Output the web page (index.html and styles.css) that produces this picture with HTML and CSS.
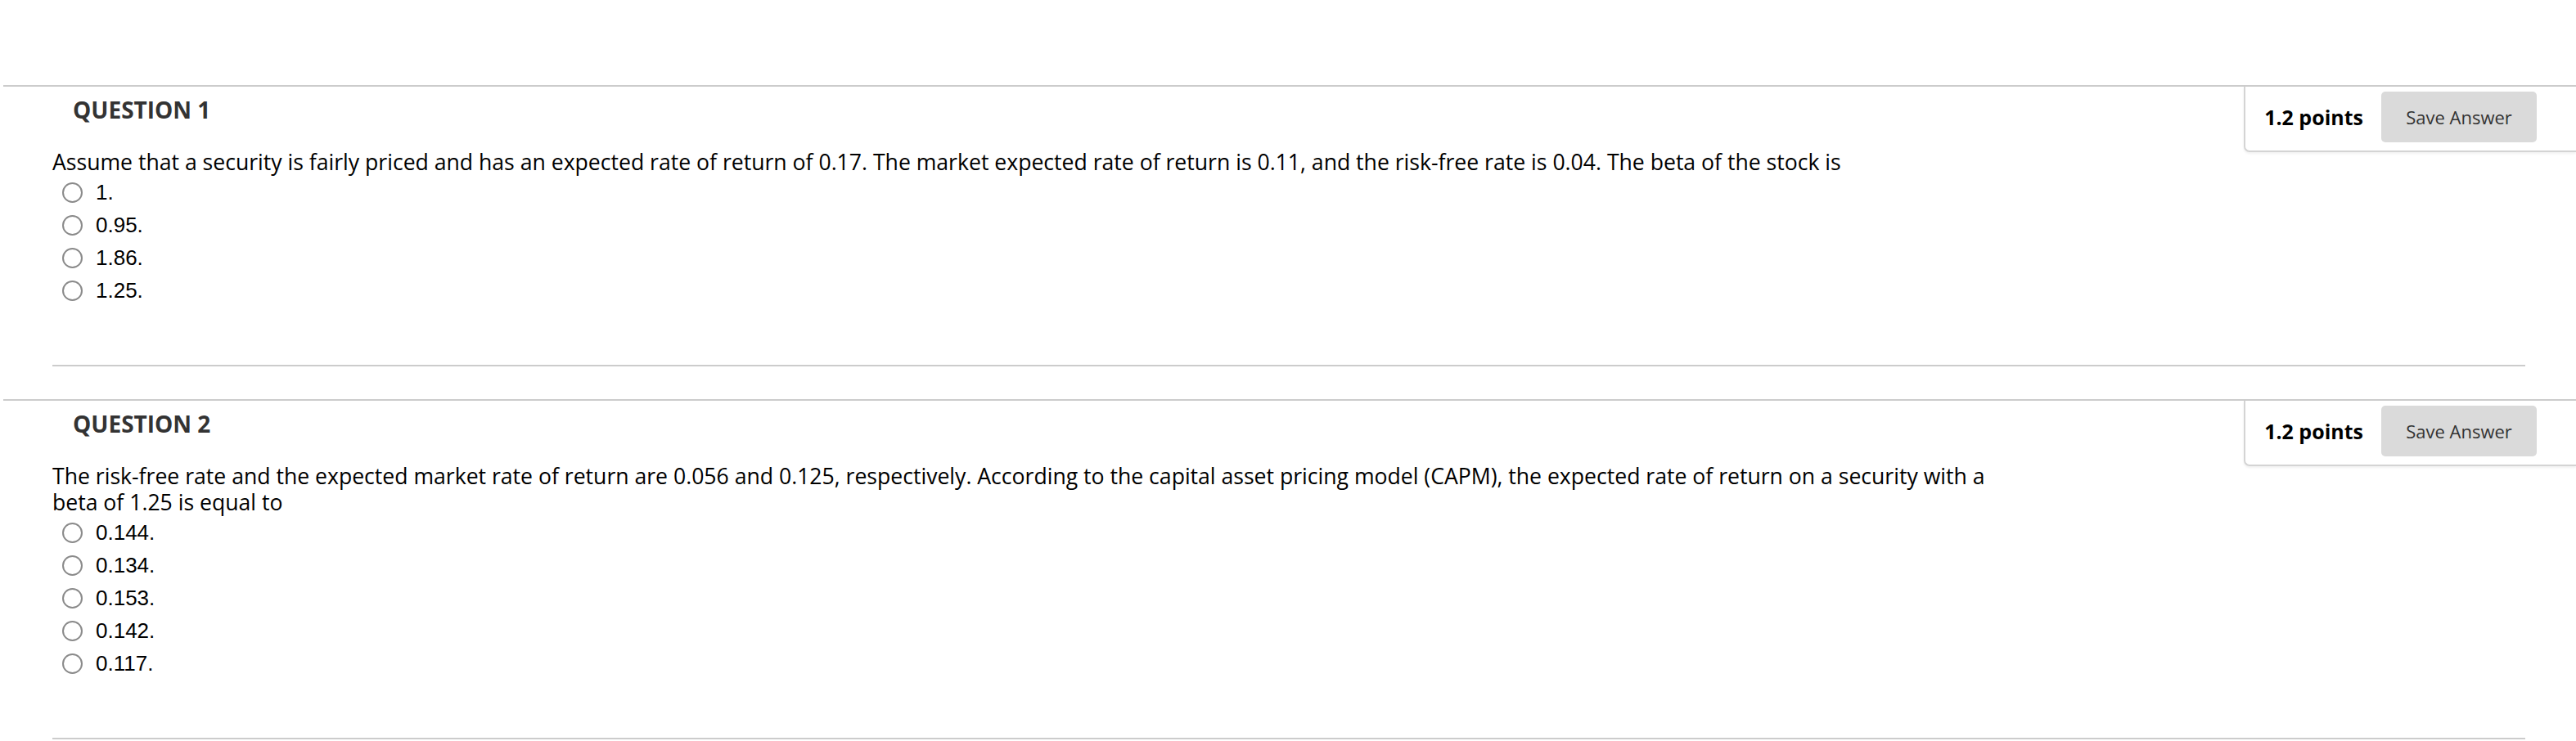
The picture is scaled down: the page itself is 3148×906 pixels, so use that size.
FILE: index.html
```html
<!DOCTYPE html>
<html lang="en">
<head>
<meta charset="utf-8">
<title>Questions</title>
<link rel="stylesheet" href="styles.css">
</head>
<body>
<main class="page">
  <section class="question">
    <div class="q-head">
      <h3 class="q-title">QUESTION 1</h3>
      <div class="points-box">
        <span class="points">1.2 points</span>
        <button class="save-btn" type="button">Save Answer</button>
      </div>
    </div>
    <div class="q-body">
      <p class="q-text">Assume that a security is fairly priced and has an expected rate of return of 0.17. The market expected rate of return is 0.11, and the risk-free rate is 0.04. The beta of the stock is</p>
      <ul class="options">
        <li class="option"><span class="radio"></span><span class="opt-label">1.</span></li>
        <li class="option"><span class="radio"></span><span class="opt-label">0.95.</span></li>
        <li class="option"><span class="radio"></span><span class="opt-label">1.86.</span></li>
        <li class="option"><span class="radio"></span><span class="opt-label">1.25.</span></li>
      </ul>
    </div>
    <div class="q-divider"></div>
  </section>

  <section class="question">
    <div class="q-head">
      <h3 class="q-title">QUESTION 2</h3>
      <div class="points-box">
        <span class="points">1.2 points</span>
        <button class="save-btn" type="button">Save Answer</button>
      </div>
    </div>
    <div class="q-body">
      <p class="q-text">The risk-free rate and the expected market rate of return are 0.056 and 0.125, respectively. According to the capital asset pricing model (CAPM), the expected rate of return on a security with a beta of 1.25 is equal to</p>
      <ul class="options">
        <li class="option"><span class="radio"></span><span class="opt-label">0.144.</span></li>
        <li class="option"><span class="radio"></span><span class="opt-label">0.134.</span></li>
        <li class="option"><span class="radio"></span><span class="opt-label">0.153.</span></li>
        <li class="option"><span class="radio"></span><span class="opt-label">0.142.</span></li>
        <li class="option"><span class="radio"></span><span class="opt-label">0.117.</span></li>
      </ul>
    </div>
    <div class="q-divider"></div>
  </section>
</main>
</body>
</html>
```

FILE: styles.css
```css
html, body {
  margin: 0;
  padding: 0;
  background: #ffffff;
  overflow: hidden;
}

body {
  font-family: "Open Sans", "Liberation Sans", sans-serif;
  color: #000;
}

.page {
  padding-top: 104px;
}

.question {
  margin-left: 4px;
  border-top: 2px solid #cccccc;
}

.question + .question {
  margin-top: 40px;
}

.q-head {
  display: flex;
  align-items: flex-start;
  height: 76px;
}

.q-title {
  margin: 9px 0 0 85px;
  font-size: 28px;
  font-weight: 700;
  color: #333333;
  line-height: normal;
}

.points-box {
  margin-left: auto;
  display: flex;
  align-items: center;
  box-sizing: border-box;
  height: 80px;
  padding: 6px 48px 10px 23px;
  border-left: 2px solid #d4d4d4;
  border-bottom: 2px solid #d4d4d4;
  border-bottom-left-radius: 7px;
  background: #ffffff;
  box-shadow: 0 2px 3px rgba(0, 0, 0, 0.06);
}

.points {
  font-size: 25px;
  font-weight: 700;
  color: #000;
  margin-right: 22px;
}

.save-btn {
  height: 62px;
  width: 190px;
  border: none;
  border-radius: 5px;
  background: #dadada;
  color: #333333;
  font-family: "Open Sans", "Liberation Sans", sans-serif;
  font-size: 22px;
  padding: 0;
}

.q-body {
  padding: 0 0 71px 60px;
}

.q-text {
  margin: 0;
  width: 2400px;
  font-size: 26.6px;
  line-height: 32px;
  color: #000;
}

.options {
  list-style: none;
  margin: 0;
  padding: 1px 0 0 12px;
}

.option {
  display: flex;
  align-items: center;
  height: 40px;
}

.radio {
  box-sizing: border-box;
  width: 25px;
  height: 25px;
  border: 2px solid #8a8a8a;
  border-radius: 50%;
  background: #fff;
  margin-right: 16px;
  flex: none;
}

.opt-label {
  font-family: "Liberation Sans", Arial, sans-serif;
  font-size: 26px;
  color: #000;
}

.q-divider {
  height: 2px;
  background: #cccccc;
  margin: 0 62px 0 60px;
}
```
